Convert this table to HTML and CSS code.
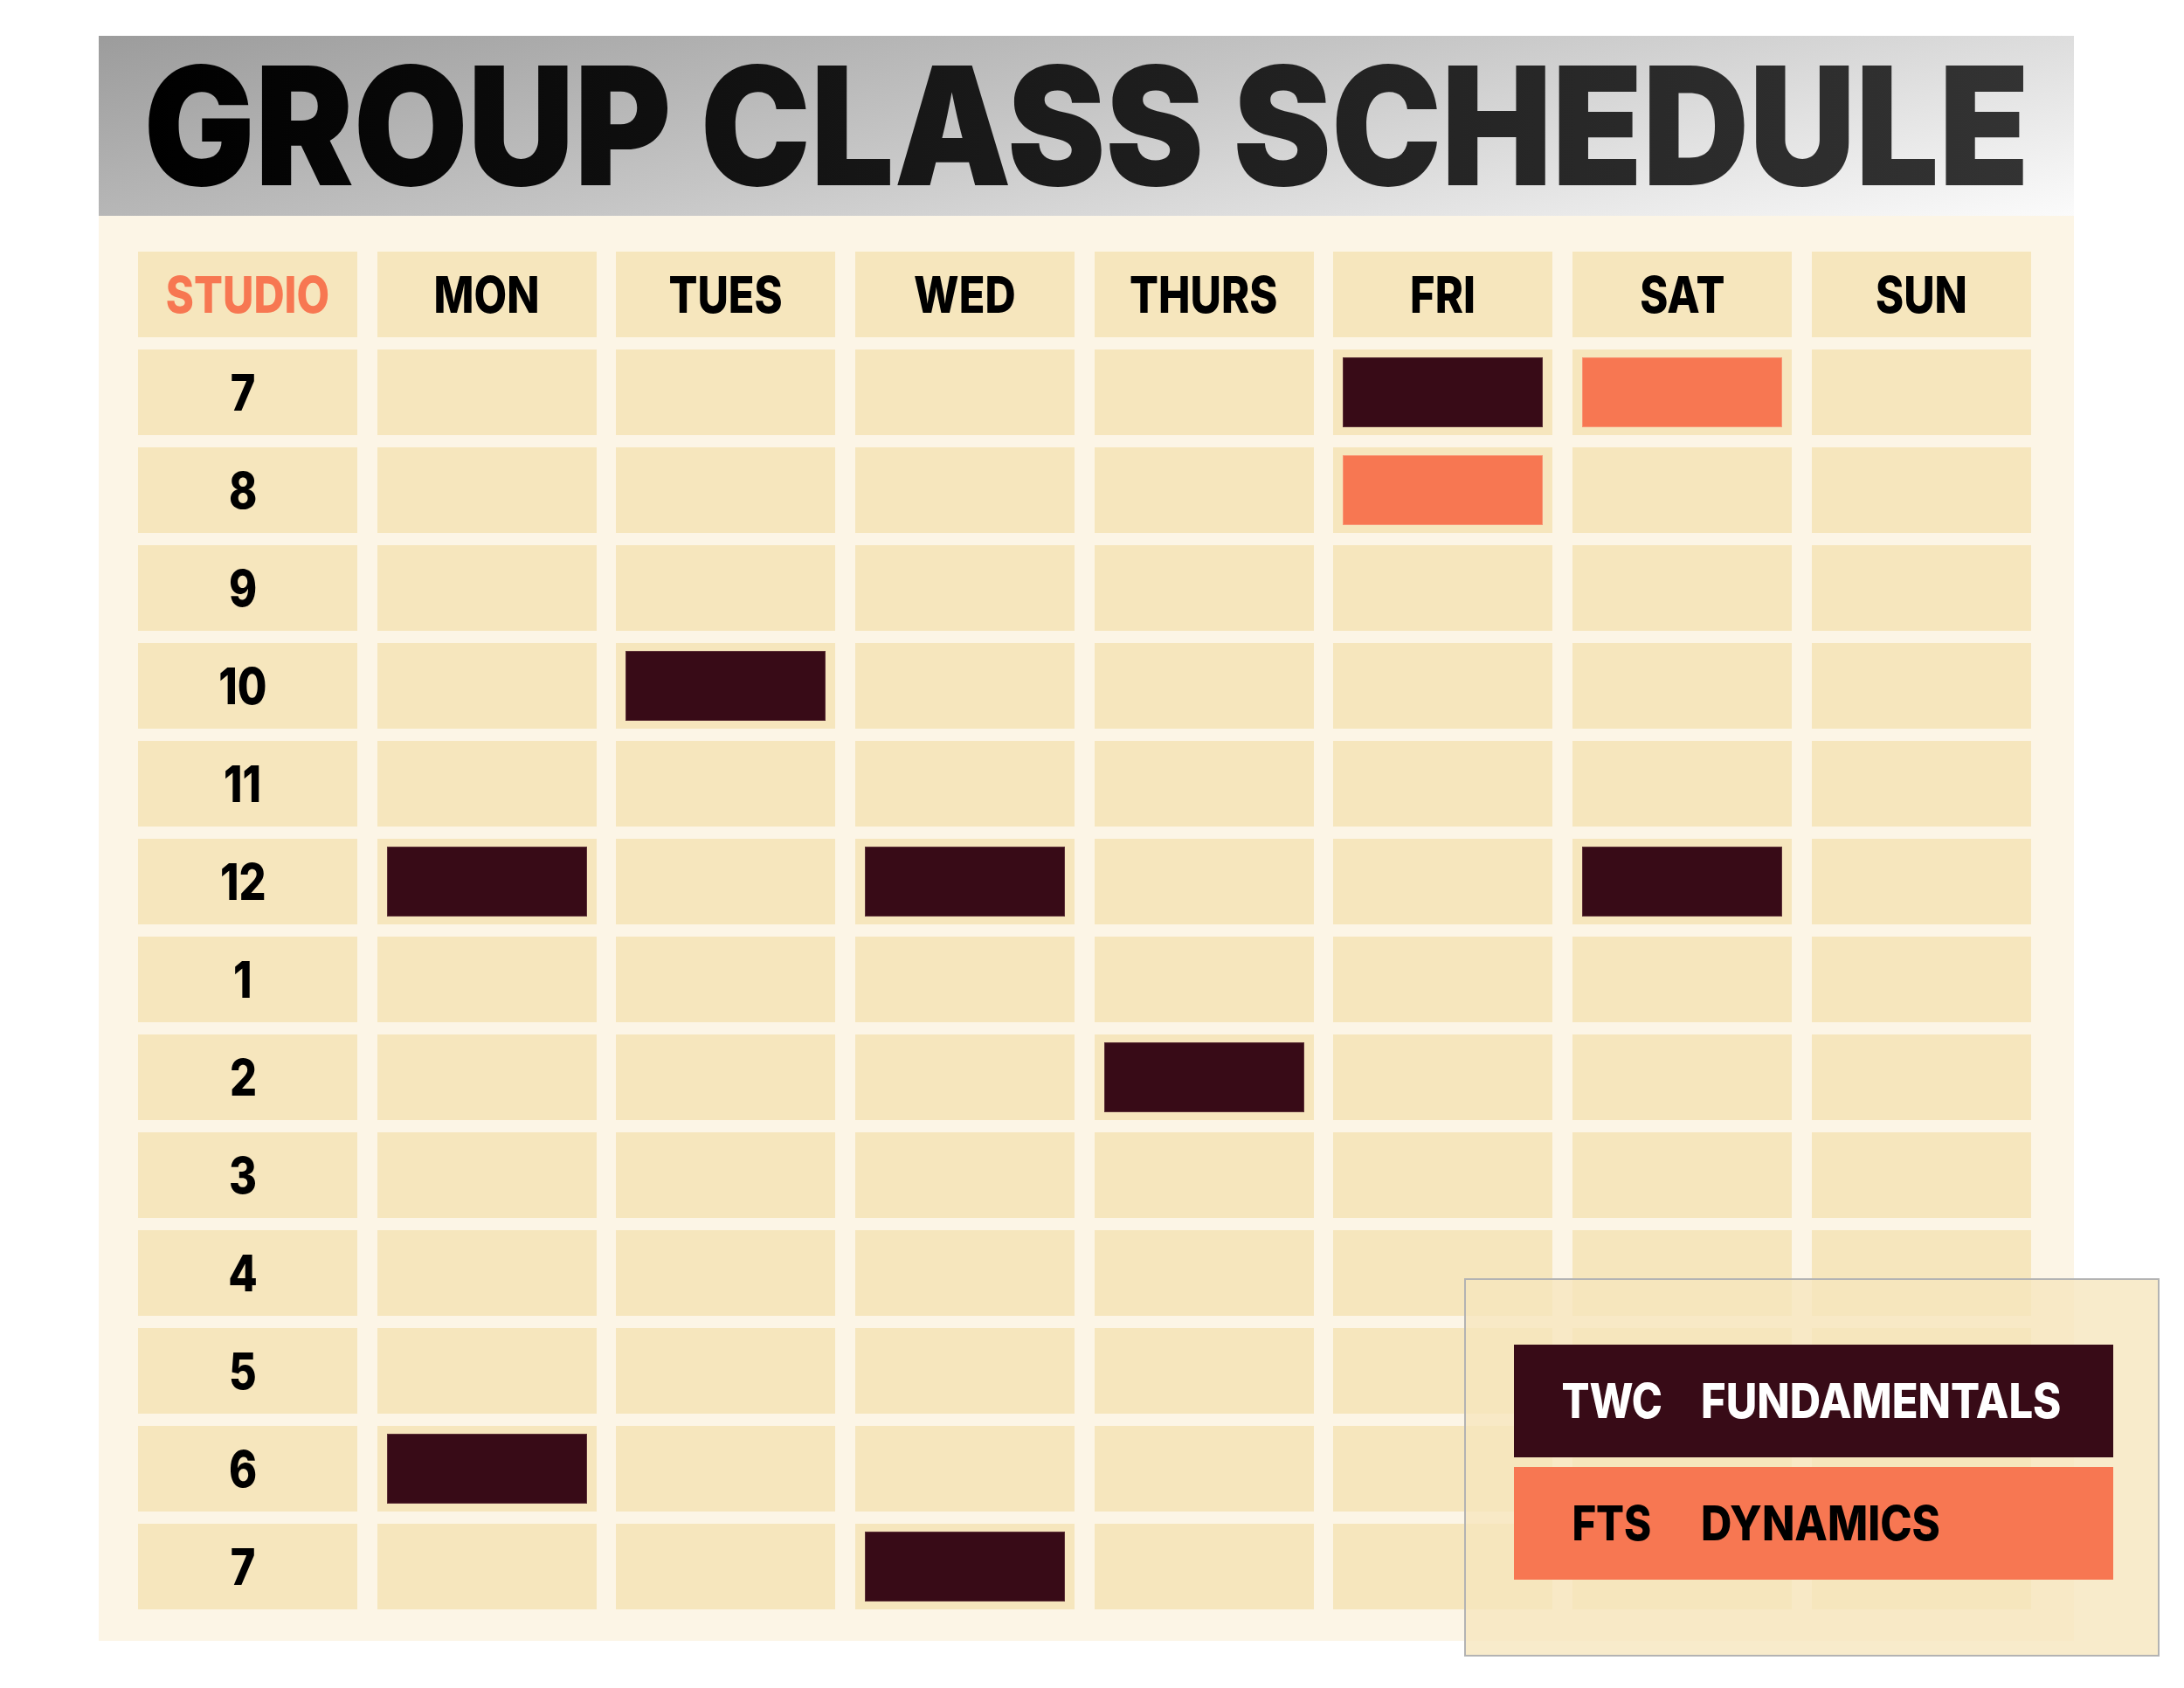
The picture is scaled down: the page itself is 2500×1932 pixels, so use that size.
FILE: index.html
```html
<!DOCTYPE html>
<html>
<head>
<meta charset="utf-8">
<link rel="stylesheet" href="styles.css">
</head>
<body>
<div class="page">
  <header class="banner"><h1 class="title"><span>GROUP CLASS SCHEDULE</span></h1></header>
  <section class="panel">
    <div class="grid">
      <div class="cell head studio"><span class="t">STUDIO</span></div>
      <div class="cell head"><span class="t">MON</span></div>
      <div class="cell head"><span class="t">TUES</span></div>
      <div class="cell head"><span class="t">WED</span></div>
      <div class="cell head"><span class="t">THURS</span></div>
      <div class="cell head"><span class="t">FRI</span></div>
      <div class="cell head"><span class="t">SAT</span></div>
      <div class="cell head"><span class="t">SUN</span></div>

      <div class="cell hour"><span class="t">7</span></div>
      <div class="cell"></div><div class="cell"></div><div class="cell"></div><div class="cell"></div>
      <div class="cell"><div class="blk dark"></div></div>
      <div class="cell"><div class="blk orange"></div></div>
      <div class="cell"></div>

      <div class="cell hour"><span class="t">8</span></div>
      <div class="cell"></div><div class="cell"></div><div class="cell"></div><div class="cell"></div>
      <div class="cell"><div class="blk orange"></div></div>
      <div class="cell"></div><div class="cell"></div>

      <div class="cell hour"><span class="t">9</span></div>
      <div class="cell"></div><div class="cell"></div><div class="cell"></div><div class="cell"></div>
      <div class="cell"></div><div class="cell"></div><div class="cell"></div>

      <div class="cell hour"><span class="t">10</span></div>
      <div class="cell"></div>
      <div class="cell"><div class="blk dark"></div></div>
      <div class="cell"></div><div class="cell"></div><div class="cell"></div><div class="cell"></div><div class="cell"></div>

      <div class="cell hour"><span class="t">11</span></div>
      <div class="cell"></div><div class="cell"></div><div class="cell"></div><div class="cell"></div>
      <div class="cell"></div><div class="cell"></div><div class="cell"></div>

      <div class="cell hour"><span class="t">12</span></div>
      <div class="cell"><div class="blk dark"></div></div>
      <div class="cell"></div>
      <div class="cell"><div class="blk dark"></div></div>
      <div class="cell"></div><div class="cell"></div>
      <div class="cell"><div class="blk dark"></div></div>
      <div class="cell"></div>

      <div class="cell hour"><span class="t">1</span></div>
      <div class="cell"></div><div class="cell"></div><div class="cell"></div><div class="cell"></div>
      <div class="cell"></div><div class="cell"></div><div class="cell"></div>

      <div class="cell hour"><span class="t">2</span></div>
      <div class="cell"></div><div class="cell"></div><div class="cell"></div>
      <div class="cell"><div class="blk dark"></div></div>
      <div class="cell"></div><div class="cell"></div><div class="cell"></div>

      <div class="cell hour"><span class="t">3</span></div>
      <div class="cell"></div><div class="cell"></div><div class="cell"></div><div class="cell"></div>
      <div class="cell"></div><div class="cell"></div><div class="cell"></div>

      <div class="cell hour"><span class="t">4</span></div>
      <div class="cell"></div><div class="cell"></div><div class="cell"></div><div class="cell"></div>
      <div class="cell"></div><div class="cell"></div><div class="cell"></div>

      <div class="cell hour"><span class="t">5</span></div>
      <div class="cell"></div><div class="cell"></div><div class="cell"></div><div class="cell"></div>
      <div class="cell"></div><div class="cell"></div><div class="cell"></div>

      <div class="cell hour"><span class="t">6</span></div>
      <div class="cell"><div class="blk dark"></div></div>
      <div class="cell"></div><div class="cell"></div><div class="cell"></div>
      <div class="cell"></div><div class="cell"></div><div class="cell"></div>

      <div class="cell hour"><span class="t">7</span></div>
      <div class="cell"></div><div class="cell"></div>
      <div class="cell"><div class="blk dark"></div></div>
      <div class="cell"></div><div class="cell"></div><div class="cell"></div><div class="cell"></div>
    </div>
  </section>
  <aside class="legend">
    <div class="key dark"><span class="abbr"><span class="t">TWC</span></span><span class="name"><span class="t">FUNDAMENTALS</span></span></div>
    <div class="key orange"><span class="abbr"><span class="t">FTS</span></span><span class="name"><span class="t">DYNAMICS</span></span></div>
  </aside>
</div>
</body>
</html>
```
FILE: styles.css
```css
* { box-sizing: border-box; }
html, body { margin: 0; padding: 0; background: #ffffff; }
body {
  font-family: "Inter", "Roboto", "DejaVu Sans", sans-serif;
  padding-top: 41px;
  min-height: 1932px;
}

.page {
  position: relative;
  width: 2261px;
  margin-left: 113px;
  padding-bottom: 54px;
}

.banner {
  height: 206px;
  background: linear-gradient(168deg, #9c9c9c 0%, #c4c4c4 45%, #fbfbfb 100%);
  display: flex;
  align-items: center;
  justify-content: center;
}
.title {
  margin: 0;
  font-size: 188px;
  font-weight: 900;
  line-height: 1;
  white-space: nowrap;
}
.title span {
  display: inline-block;
  transform: scaleX(0.898);
  background: linear-gradient(90deg, #000000 0%, #1c1c1c 50%, #333333 100%);
  -webkit-background-clip: text;
  background-clip: text;
  color: transparent;
}

.panel {
  background: #fcf5e6;
  padding: 41px 48px 36px 45px;
}
.grid {
  display: grid;
  grid-template-columns: repeat(8, 251px);
  grid-auto-rows: 98px;
  column-gap: 22.7px;
  row-gap: 14px;
}
.cell {
  background: #f6e6bd;
  display: flex;
  align-items: center;
  justify-content: center;
  font-size: 58px;
  font-weight: 800;
  color: #000;
  line-height: 1;
}
.hour { padding-right: 11px; }
.t { display: inline-block; transform: scaleX(0.84); }
.studio { color: #f77752; }

.blk {
  width: 229px;
  height: 80px;
}
.blk.dark { background: #380b17; border: 1px solid #5c3036; }
.blk.orange { background: #f77752; border: 1px solid #f99575; }

.legend {
  position: absolute;
  left: 1563px;
  top: 1422px;
  width: 796px;
  height: 433px;
  border: 2px solid #b3b3b3;
  background: rgba(246, 230, 189, 0.78);
  padding: 74px 51px 0 55px;
  display: flex;
  flex-direction: column;
  gap: 11px;
}
.key {
  height: 129px;
  display: flex;
  align-items: center;
  padding-left: 40px;
  font-size: 55px;
  font-weight: 800;
  line-height: 1;
}
.key.dark { background: #380b17; color: #ffffff; }
.key.orange { background: #f77752; color: #000000; }
.abbr { width: 144px; text-align: center; }
.abbr .t { transform: scaleX(0.86); }
.name { margin-left: 30px; }
.name .t { transform-origin: left center; transform: scaleX(0.89); }
```
